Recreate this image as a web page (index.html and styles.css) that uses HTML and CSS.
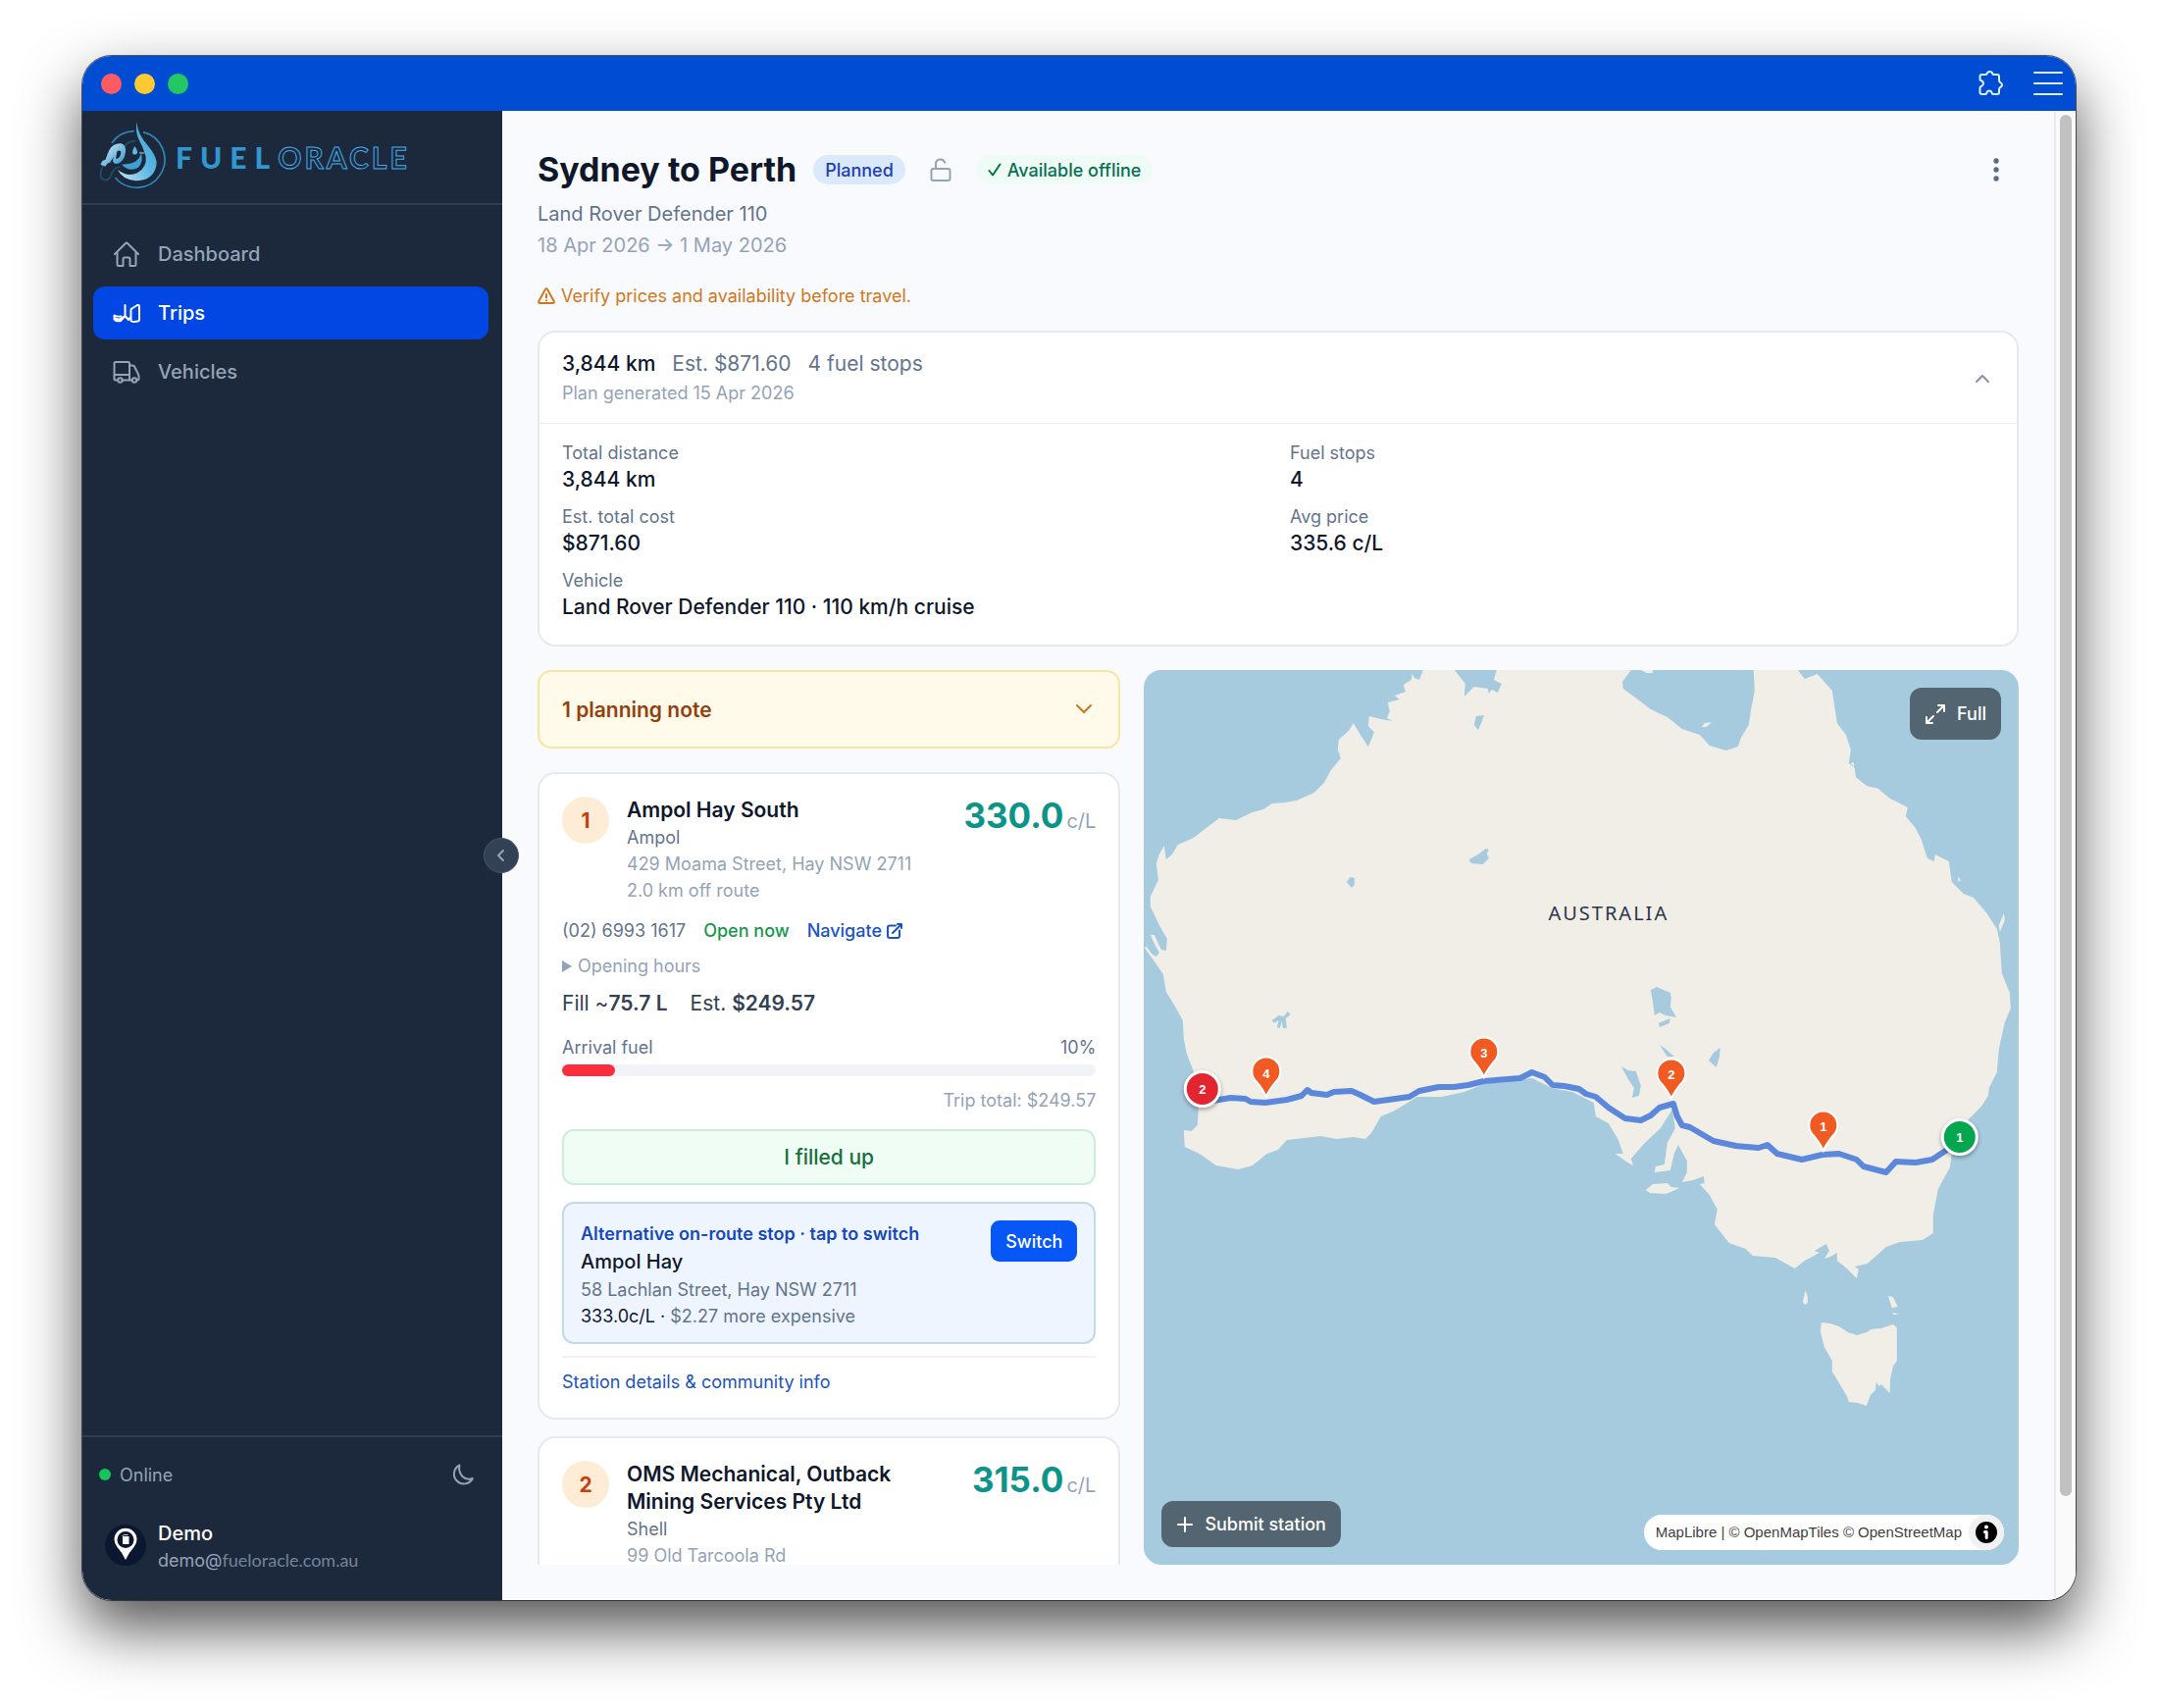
FILE: index.html
```html
<!DOCTYPE html>
<html lang="en">
<head>
<meta charset="utf-8">
<title>Fuel Oracle – Sydney to Perth</title>
<link rel="stylesheet" href="styles.css">
</head>
<body>
<div class="window">
  <div class="titlebar">
    <div class="lights"><i class="light red"></i><i class="light yellow"></i><i class="light green"></i></div>
    <div class="titlebar-actions">
      <button class="icon-btn" aria-label="Extensions">
        <svg width="28" height="28" viewBox="0 0 28 28" fill="none" stroke="currentColor" stroke-width="2" stroke-linejoin="round"><path d="M3.500 7Q3.500 5 5.500 5H9.500Q10.500 5 10.700 4Q11.300 2 13.500 2Q15.700 2 16.300 4Q16.500 5 17.500 5H21Q23 5 23 7V11Q23 12.300 24.300 13Q26 14 26 15.500Q26 17 24.300 18Q23 18.700 23 20V23Q23 25 21 25H17Q15.800 25 15.500 23.500Q15 21.500 13 21.500Q11 21.500 10.500 23.500Q10.200 25 9 25H5.500Q3.500 25 3.500 23V18.500Q3.500 17.500 4.800 17Q7 16 7 14Q7 12 4.800 11.300Q3.500 11 3.500 10Z"/></svg>
      </button>
      <button class="icon-btn" aria-label="Menu">
        <svg width="30" height="26" viewBox="0 0 30 26" stroke="currentColor" stroke-width="2" stroke-linecap="round"><path d="M1 2H29M1 13H29M1 24H29"/></svg>
      </button>
    </div>
  </div>

  <div class="body">
    <aside class="sidebar">
      <a class="brand" href="#" aria-label="Fuel Oracle">
        <svg class="brand-mark" viewBox="90 250 210 210" fill="none">
          <defs>
            <linearGradient id="drop" x1="0" y1="0" x2="1" y2="1"><stop offset="0" stop-color="#d5ecf8"/><stop offset="1" stop-color="#2f93cb"/></linearGradient>
            <linearGradient id="swoosh" x1="0" y1="1" x2="1" y2="0"><stop offset="0" stop-color="#c4e6f6"/><stop offset=".5" stop-color="#5cb6e2"/><stop offset="1" stop-color="#3a9ed6"/></linearGradient>
          </defs>
          <path d="M132 318A86 86 0 0 1 200 282M228 285A86 86 0 1 1 142 424" stroke="#2f86b8" stroke-width="5"/>
          <path d="M165 345Q172 312 205 312M105 388Q92 415 102 428Q122 440 132 412Q140 390 158 392" stroke="#1d4f66" stroke-width="5"/>
          <path d="M208 254Q211 292 242 326Q274 364 268 388Q258 434 205 434Q164 430 150 400Q180 424 210 410Q240 392 236 360Q228 330 214 306Q204 286 208 254Z" fill="url(#swoosh)"/>
          <path d="M162 384Q190 384 206 374Q218 364 222 350Q230 376 212 394Q184 408 162 384Z" fill="#3d9fd2"/>
          <path d="M202 328Q212 342 210 350Q202 358 195 350Q194 340 202 328Z" fill="#5fb8e2"/>
          <path d="M216 348L230 349" stroke="#7b8794" stroke-width="6"/>
          <path d="M97 384L104 372L112 370L124 340Q136 318 160 320Q176 324 174 346Q170 378 146 382Q130 380 138 360L126 378L120 380L112 390ZM148 344L144 366Q158 366 160 348Q160 338 148 344Z" fill="url(#drop)" fill-rule="evenodd"/>
        </svg>
        <span class="brand-name"><b>FUEL</b><span>ORACLE</span></span>
      </a>
      <nav class="nav">
        <a class="nav-item" href="#">
          <svg width="28" height="28" viewBox="0 0 28 28" fill="none" stroke="currentColor" stroke-width="2" stroke-linejoin="round" stroke-linecap="round"><path d="M2 14L12.800 3.200Q14 2 15.200 3.200L26 14M4.500 12V24.500Q4.500 26 6 26H10.500V19Q10.500 17.500 12 17.500H16Q17.500 17.500 17.500 19V26H22Q23.500 26 23.500 24.500V12"/></svg>
          Dashboard
        </a>
        <a class="nav-item active" href="#" aria-current="page">
          <svg width="28" height="28" viewBox="0 0 28 28" fill="none" stroke="currentColor" stroke-width="2" stroke-linejoin="round" stroke-linecap="round"><path d="M12.500 6V17L8 22Q3 23 1.500 20.500V16.500Q4 18 8.500 17.500M2 19.500Q7 21.500 9.500 19L12.500 17L16 21L18.500 17.500M18.500 19V11Q18.500 10 19.500 9.500L25 6Q27 5.500 27 7.500V21Q27 22 26 22.300Q21 24 18.500 22Z"/></svg>
          Trips
        </a>
        <a class="nav-item" href="#">
          <svg width="28" height="28" viewBox="0 0 28 28" fill="none" stroke="currentColor" stroke-width="2" stroke-linejoin="round" stroke-linecap="round"><path d="M5 22.500H3Q1.500 22.500 1.500 21V5.500Q1.500 4 3 4H15.500Q17 4 17 5.500V22.500H9.500M1.500 17H17M17 7.500H20Q21.500 7.500 22.300 9L26.200 17Q26.800 18.500 26.500 21Q26.500 22.500 25 22.500M17 22.500H19.500"/><circle cx="7.500" cy="22.500" r="2.200"/><circle cx="22" cy="22.500" r="2.200"/></svg>
          Vehicles
        </a>
      </nav>
      <div class="sidebar-foot">
        <div class="status">
          <span class="status-label"><i class="dot"></i>Online</span>
          <button class="icon-btn muted" aria-label="Dark mode">
            <svg width="24" height="24" viewBox="0 0 24 24" fill="none" stroke="currentColor" stroke-width="2" stroke-linejoin="round"><path d="M8.500 2.500A10 10 0 1 0 21.800 16Q15.500 18 11.500 14Q7 9 8.500 2.500Z"/></svg>
          </button>
        </div>
        <div class="user">
          <svg width="42" height="42" viewBox="0 0 42 42"><circle cx="21" cy="21" r="21" fill="#0b1730"/><path d="M21 36Q18 29 12.500 23A11.500 11.500 0 1 1 29.500 23Q24 29 21 36Z" fill="#fff"/><circle cx="21" cy="15.500" r="8.500" fill="#0b1730"/><path d="M18 12H24.500V20H18Z" fill="#fff"/><path d="M17.500 12L19 10.500H23.500" stroke="#cbd5e1" fill="none"/></svg>
          <div>
            <div class="user-name">Demo</div>
            <div class="user-mail">demo@<span>fueloracle.com.au</span></div>
          </div>
        </div>
      </div>
      <button class="collapse" aria-label="Collapse sidebar">
        <svg width="12" height="14" viewBox="0 0 12 14" fill="none" stroke="currentColor" stroke-width="2" stroke-linecap="round" stroke-linejoin="round"><path d="M8 2L3 7L8 12"/></svg>
      </button>
    </aside>

    <main class="main">
      <header>
        <div class="head-row">
          <h1>Sydney to Perth</h1>
          <span class="pill pill-blue">Planned</span>
          <button class="icon-btn lock" aria-label="Unlocked">
            <svg width="24" height="24" viewBox="0 0 24 24" fill="none" stroke="currentColor" stroke-width="2" stroke-linecap="round" stroke-linejoin="round"><rect x="2.500" y="11" width="19" height="12" rx="2"/><path d="M7 11V6A4.700 4.700 0 0 1 16.200 4.800"/></svg>
          </button>
          <span class="pill pill-green"><svg width="14" height="16" viewBox="0 0 14 16" fill="none" stroke="currentColor" stroke-width="2" stroke-linecap="round" stroke-linejoin="round"><path d="M1.500 9L5 13.500L12.500 2.500"/></svg>Available offline</span>
          <button class="icon-btn more" aria-label="More actions">
            <svg width="8" height="24" viewBox="0 0 8 24" fill="currentColor"><circle cx="4" cy="3" r="2.700"/><circle cx="4" cy="12" r="2.700"/><circle cx="4" cy="21" r="2.700"/></svg>
          </button>
        </div>
        <p class="vehicle">Land Rover Defender 110</p>
        <p class="dates">18 Apr 2026 → 1 May 2026</p>
        <p class="warning"><svg width="18" height="18" viewBox="0 0 18 18" fill="none" stroke="currentColor" stroke-width="2" stroke-linecap="round" stroke-linejoin="round"><path d="M7.900 2Q9 .5 10.100 2L16.700 14Q17.300 16 15.500 16H2.500Q.7 16 1.300 14ZM9 7V10.500M9 13.200V13.300"/></svg>Verify prices and availability before travel.</p>
      </header>

      <section class="card summary">
        <div class="summary-head">
          <div>
            <p class="summary-line"><strong>3,844 km</strong><span>Est. $871.60</span><span>4 fuel stops</span></p>
            <p class="generated">Plan generated 15 Apr 2026</p>
          </div>
          <button class="icon-btn fold" aria-label="Collapse summary"><svg width="16" height="10" viewBox="0 0 16 10" fill="none" stroke="currentColor" stroke-width="2" stroke-linecap="round" stroke-linejoin="round"><path d="M2 8L8 2L14 8"/></svg></button>
        </div>
        <dl class="facts">
          <div><dt>Total distance</dt><dd>3,844 km</dd></div>
          <div><dt>Fuel stops</dt><dd>4</dd></div>
          <div><dt>Est. total cost</dt><dd>$871.60</dd></div>
          <div><dt>Avg price</dt><dd>335.6 c/L</dd></div>
          <div><dt>Vehicle</dt><dd>Land Rover Defender 110 · 110 km/h cruise</dd></div>
        </dl>
      </section>

      <div class="columns">
        <div class="stops">
          <button class="note">1 planning note<svg width="18" height="12" viewBox="0 0 18 12" fill="none" stroke="currentColor" stroke-width="2" stroke-linecap="round" stroke-linejoin="round"><path d="M2 2L9 9L16 2"/></svg></button>

          <article class="card stop">
            <div class="stop-head">
              <span class="num">1</span>
              <div class="stop-id">
                <h2>Ampol Hay South</h2>
                <p class="brandname">Ampol</p>
                <p class="light-text">429 Moama Street, Hay NSW 2711</p>
                <p class="light-text">2.0 km off route</p>
              </div>
              <p class="price"><b>330.0</b><span>c/L</span></p>
            </div>
            <div class="contact">
              <span>(02) 6993 1617</span>
              <span class="open">Open now</span>
              <a href="#">Navigate<svg width="18" height="18" viewBox="0 0 18 18" fill="none" stroke="currentColor" stroke-width="2" stroke-linecap="round" stroke-linejoin="round"><path d="M10 3.500H4Q2 3.500 2 5.500V14Q2 16 4 16H12Q14 16 14 14V8.500M7 11L16 2M12 2H16V6"/></svg></a>
            </div>
            <details class="hours"><summary>Opening hours</summary></details>
            <p class="fill"><span>Fill ~<b>75.7 L</b></span><span>Est. <b>$249.57</b></span></p>
            <div class="arrival"><span>Arrival fuel</span><span>10%</span></div>
            <div class="bar"><div style="width:10%"></div></div>
            <p class="total">Trip total: $249.57</p>
            <button class="filled">I filled up</button>
            <div class="alt">
              <div>
                <p class="alt-title">Alternative on-route stop · tap to switch</p>
                <p class="alt-name">Ampol Hay</p>
                <p>58 Lachlan Street, Hay NSW 2711</p>
                <p><span class="ink">333.0c/L ·</span> $2.27 more expensive</p>
              </div>
              <button class="switch">Switch</button>
            </div>
            <div class="stop-foot"><a href="#">Station details &amp; community info</a></div>
          </article>

          <article class="card stop">
            <div class="stop-head">
              <span class="num">2</span>
              <div class="stop-id">
                <h2>OMS Mechanical, Outback Mining Services Pty Ltd</h2>
                <p class="brandname">Shell</p>
                <p class="light-text">99 Old Tarcoola Rd</p>
              </div>
              <p class="price"><b>315.0</b><span>c/L</span></p>
            </div>
          </article>
        </div>

        <div class="map">
          <svg class="map-canvas" viewBox="1166 683 892 912" preserveAspectRatio="xMidYMid slice" role="img" aria-label="Route map of Australia">
            <g fill="#f1eee8">
              <path d="M1451 683L1447 693L1442 691L1440 687L1439 693L1431 698L1433 705L1422 709L1427 713L1415 716L1417 725L1414 732L1420 735L1408 733L1396 730L1395 740L1401 746L1399 752L1395 761L1387 749L1380 737L1375 745L1365 754L1364 764L1367 773L1357 785L1350 798L1340 808L1322 816L1310 818L1297 819L1288 825L1277 828L1260 836L1243 834L1230 844L1217 854L1201 861L1195 871L1189 876L1187 862L1182 871L1179 880L1181 897L1173 914L1173 924L1182 943L1190 957L1189 969L1184 968L1177 953L1173 953L1177 962L1182 971L1179 975L1175 973L1169 965L1167 966L1177 980L1186 993L1189 1011L1197 1024L1206 1040L1207 1059L1210 1074L1217 1092L1222 1131L1221 1147L1215 1153L1207 1152L1208 1169L1223 1176L1240 1188L1263 1192L1277 1188L1292 1176L1303 1172L1312 1162L1347 1158L1363 1161L1380 1159L1392 1161L1398 1155L1408 1138L1422 1132L1445 1118L1470 1118L1493 1113L1513 1105L1533 1102L1562 1099L1582 1109L1603 1113L1625 1124L1627 1138L1640 1145L1650 1162L1655 1176L1647 1176L1658 1184L1665 1188L1663 1181L1677 1165L1693 1150L1705 1131L1708 1150L1700 1165L1697 1187L1688 1189L1687 1195L1703 1193L1707 1176L1711 1167L1720 1183L1720 1195L1715 1205L1726 1203L1737 1199L1738 1206L1733 1207L1743 1218L1751 1233L1748 1248L1763 1267L1780 1273L1787 1280L1810 1282L1830 1293L1840 1285L1855 1277L1850 1275L1862 1268L1865 1275L1860 1283L1866 1281L1873 1277L1873 1285L1883 1293L1893 1303L1895 1294L1891 1291L1904 1288L1923 1271L1937 1266L1960 1264L1971 1257L1971 1238L1976 1212L1988 1190L1990 1176L2007 1141L2020 1128L2027 1117L2028 1109L2036 1093L2038 1069L2044 1042L2050 1028L2049 1012L2041 992L2039 961L2036 947L2025 930L2012 915L2002 911L1990 899L1987 878L1973 871L1972 878L1965 875L1959 856L1953 844L1943 832L1945 823L1927 814L1915 804L1903 801L1892 792L1891 783L1885 778L1887 764L1882 749L1873 737L1868 704L1853 687L1840 692L1833 683H1788L1789 704L1785 725L1783 739L1775 752L1772 761L1760 765L1743 760L1733 749L1715 743L1700 731L1683 723L1670 713L1655 702L1654 695L1663 683H1526L1523 693L1531 697L1527 706L1521 703L1518 707L1517 702L1503 700L1493 710L1494 697L1483 683Z"/>
              <path d="M1678 1213L1685 1207L1700 1206L1704 1210L1712 1211L1706 1214L1698 1217L1682 1216Z"/>
              <path d="M1841 1315L1843 1322L1843 1328L1840 1330L1838 1327Z"/>
              <path d="M1925 1321L1930 1322L1935 1332L1929 1333Z"/>
              <path d="M1930 1338L1937 1340L1930 1340Z"/>
              <path d="M1857 1348L1866 1349L1875 1352L1884 1358L1893 1361L1903 1358L1908 1355L1918 1354L1930 1350L1934 1353L1934 1387L1930 1393L1927 1407L1927 1420L1922 1415L1918 1411L1916 1413L1913 1409L1912 1417L1907 1422L1903 1433L1894 1430L1885 1429L1883 1423L1877 1413L1868 1398L1868 1387L1860 1373L1856 1357Z"/>
              <path d="M2043 931L2044 938L2039 950L2038 943Z"/>
              <path d="M1735 741L1738 737L1745 736L1740 741Z"/>
              <path d="M1673 683H1685V686H1679Z"/>
              <path d="M1887 778L1890 777L1890 782ZM1996 893L1999 897L1997 899Z"/>
            </g>
            <g fill="#a6cbdf">
              <path d="M1503 739L1505 730L1513 729L1510 738L1507 744Z"/>
              <path d="M1498 876L1507 871L1515 865L1518 866L1516 870L1518 875L1512 881L1500 880Z"/>
              <path d="M1373 899L1377 894L1381 895L1381 902L1378 905Z"/>
              <path d="M1683 1009L1689 1006L1703 1012L1704 1017L1703 1026L1709 1037L1698 1035L1692 1032L1687 1035L1685 1020Z"/>
              <path d="M1691 1043L1703 1038L1702 1043L1692 1047Z"/>
              <path d="M1692 1065L1698 1069L1707 1077L1700 1077Z"/>
              <path d="M1742 1081L1747 1073L1754 1068L1753 1078L1750 1088Z"/>
              <path d="M1653 1087L1660 1091L1668 1092L1670 1098L1673 1107L1671 1117L1664 1119L1666 1109L1660 1100Z"/>
              <path d="M1297 1040L1304 1035L1309 1036L1313 1031L1316 1034L1311 1038L1312 1048L1308 1048L1307 1041L1305 1048L1302 1047L1304 1040L1299 1043Z"/>
            </g>
            <path fill="none" stroke="#5c88dc" stroke-width="6" stroke-linejoin="round" d="M1235 1122L1243 1121L1255 1119L1270 1120L1275 1123L1290 1124L1312 1121L1327 1117L1333 1111L1337 1114L1353 1116L1360 1113L1378 1112L1387 1116L1401 1123L1437 1118L1447 1112L1467 1108L1482 1108L1497 1106L1513 1102L1550 1099L1562 1093L1575 1098L1583 1106L1595 1107L1610 1110L1617 1115L1627 1118L1640 1129L1657 1140L1673 1142L1683 1137L1692 1129L1706 1125L1710 1138L1715 1147L1723 1149L1747 1163L1770 1168L1793 1170L1802 1167L1812 1176L1837 1182L1858 1177L1875 1176L1893 1182L1900 1189L1923 1195L1933 1184L1953 1185L1970 1182L1985 1172"/>
            <text class="country" x="1640" y="938" text-anchor="middle">AUSTRALIA</text>
            <defs><path id="pin" d="M0 25Q-3 18 -10 9.500A14.500 14.500 0 1 1 10 9.500Q3 18 0 25Z" fill="#f15a22" stroke="#fff" stroke-width="2"/></defs>
            <g class="marks" text-anchor="middle">
              <use href="#pin" x="1291" y="1093"/><text x="1291" y="1099">4</text>
              <use href="#pin" x="1513" y="1073"/><text x="1513" y="1078">3</text>
              <use href="#pin" x="1704" y="1095"/><text x="1704" y="1100">2</text>
              <use href="#pin" x="1859" y="1148"/><text x="1859" y="1153">1</text>
              <g class="ends"><circle cx="1226" cy="1110" r="17.500" fill="#e32431"/><circle cx="1998" cy="1159" r="17.500" fill="#06a650"/></g>
              <text x="1226" y="1115">2</text><text x="1998" y="1164">1</text>
            </g>
          </svg>
          <button class="map-btn full"><svg width="22" height="22" viewBox="0 0 22 22" fill="none" stroke="currentColor" stroke-width="2" stroke-linecap="round" stroke-linejoin="round"><path d="M13 9L20 2M14 2H20V8M9 13L2 20M2 14V20H8"/></svg>Full</button>
          <button class="map-btn submit"><svg width="18" height="18" viewBox="0 0 18 18" stroke="currentColor" stroke-width="2" stroke-linecap="round"><path d="M9 2V16M2 9H16"/></svg>Submit station</button>
          <div class="credits"><span><a href="#">MapLibre</a> | <a href="#">© OpenMapTiles</a> <a href="#">© OpenStreetMap</a></span><button aria-label="Toggle attribution"><svg width="22" height="22" viewBox="0 0 22 22"><circle cx="11" cy="11" r="11"/><circle cx="11" cy="5.500" r="2" fill="#fff"/><path d="M9.500 10.500H11.200V16.500" fill="none" stroke="#fff" stroke-width="3" stroke-linecap="round" stroke-linejoin="round"/></svg></button></div>
        </div>
      </div>
    </main>
    <div class="scrollbar"><div class="thumb"></div></div>
  </div>
</div>
</body>
</html>
```
FILE: styles.css
```css
* { box-sizing: border-box; }
body, h1, h2, p, dl, dd { margin: 0; }
body {
  height: 100vh;
  display: flex;
  padding: 57px 84px 110px;
  background: #fff;
  color: #0f172a;
  font: 400 18px/27px Inter, "Liberation Sans", sans-serif;
}
button { font: inherit; color: inherit; border: 0; background: none; padding: 0; }
a { color: inherit; text-decoration: none; }
svg { display: block; flex: none; }

.window {
  flex: 1;
  min-width: 0;
  display: flex;
  flex-direction: column;
  border-radius: 30px;
  overflow: hidden;
  box-shadow: 0 0 0 1px rgba(20, 25, 35, .7), 0 29px 62px rgba(0, 0, 0, .68);
}
.titlebar {
  flex: none;
  height: 56px;
  padding: 0 13px 0 19px;
  display: flex;
  align-items: center;
  justify-content: space-between;
  background: #004dd4;
  color: #dff1ff;
}
.lights { display: flex; gap: 13px; }
.light { width: 21px; height: 21px; border-radius: 50%; }
.red { background: #ff5b62; }
.yellow { background: #ffc933; }
.green { background: #24c862; }
.titlebar-actions { display: flex; align-items: center; gap: 30px; }

.body { flex: 1; min-height: 0; display: flex; background: #f9fafd; }

.sidebar {
  position: relative;
  flex: none;
  width: 428px;
  display: flex;
  flex-direction: column;
  background: #1c293c;
  color: #94a3b8;
}
.brand {
  display: flex;
  align-items: center;
  gap: 9px;
  height: 96px;
  padding: 0 16px;
  border-bottom: 2px solid #2f3e52;
}
.brand-mark { width: 70px; height: 70px; margin-bottom: 4px; }
.brand-name {
  display: flex;
  font: 900 30px/36px Lato, sans-serif;
  letter-spacing: 8px;
  color: #3296cf;
}
.brand-name span { font-weight: 700; color: transparent; -webkit-text-stroke: 1px #45aae6; letter-spacing: 3px; }

.nav { flex: 1; display: flex; flex-direction: column; gap: 6px; padding: 23px 14px 24px 11px; }
.nav-item {
  display: flex;
  align-items: center;
  gap: 18px;
  height: 54px;
  padding: 0 20px;
  border-radius: 12px;
  font-size: 20px;
  font-weight: 500;
}
.nav-item.active { background: #0246e4; color: #fff; }

.sidebar-foot { border-top: 2px solid #2f3e52; padding: 23px 24px 24px 17px; }
.status { display: flex; align-items: center; justify-content: space-between; height: 30px; padding-right: 4px; }
.status-label { display: flex; align-items: center; gap: 9px; }
.dot { width: 12px; height: 12px; border-radius: 50%; background: #16c45c; }
.user { display: flex; align-items: center; gap: 12px; margin-top: 32px; padding: 0 6px 3px; }
.user svg { margin-bottom: 4px; }
.user-name { font-size: 20px; font-weight: 500; color: #fff; }
.user-mail span { font-family: Lato, sans-serif; color: #74849b; }
.collapse {
  position: absolute;
  right: -17px;
  top: 50%;
  width: 36px;
  height: 36px;
  margin-top: -18px;
  display: grid;
  place-items: center;
  border: 1px solid #47566b;
  border-radius: 50%;
  background: #334155;
}

.main { flex: 1; min-width: 0; display: flex; flex-direction: column; padding: 36px; }
.head-row { display: flex; align-items: center; height: 48px; }
h1 { font-size: 34px; line-height: 48px; font-weight: 700; }
.pill { display: flex; align-items: center; gap: 6px; height: 30px; border-radius: 15px; padding: 0 12px; font-weight: 500; }
.pill-blue { margin-left: 17px; background: #dbe9fd; color: #1e40af; }
.pill-green { margin-left: 24px; background: #effcf5; color: #077053; }
.lock { margin-left: 24px; color: #94a3b8; }
.more { margin-left: auto; margin-right: 19px; color: #5b6b80; }
.vehicle, .dates { font-size: 20px; line-height: 32px; color: #64748b; }
.vehicle { margin-top: 5px; }
.dates { color: #94a3b8; }
.warning { display: flex; align-items: center; gap: 6px; margin: 22px 0; color: #cf781c; }

.card { background: #fff; border: 2px solid #e5e9f0; border-radius: 18px; }
.summary { margin-bottom: 24px; flex: none; }
.summary-head {
  display: flex;
  align-items: center;
  justify-content: space-between;
  padding: 17px 27px 15px 23px;
  border-bottom: 1px solid #e8ebf1;
}
.summary-line { display: flex; gap: 17px; font-size: 21px; line-height: 30px; color: #64748b; }
.summary-line strong { font-weight: 500; color: #0f172a; }
.generated { line-height: 30px; color: #94a3b8; }
.fold { color: #8492a8; }
.facts { display: grid; grid-template-columns: 1fr 1fr; gap: 11px 24px; padding: 17px 23px 24px; }
dt { line-height: 26px; color: #64748b; }
dd { font-size: 21px; line-height: 28px; font-weight: 500; }
.facts > div { height: 54px; }

.columns { flex: 1; min-height: 0; display: grid; grid-template: minmax(0, 1fr) / 2fr 3fr; gap: 24px; }
.stops { overflow-y: auto; scrollbar-width: none; }
.note {
  width: 100%;
  height: 80px;
  margin-bottom: 24px;
  padding: 0 26px 0 23px;
  display: flex;
  align-items: center;
  justify-content: space-between;
  border: 2px solid #f6e6a0;
  border-radius: 14px;
  background: #fffaea;
  color: #93400f;
  font-size: 21px;
  font-weight: 600;
}
.note svg { color: #c8781a; }
.stop { padding: 23px; margin-bottom: 17px; }
.stop-head { display: flex; align-items: flex-start; }
.num {
  flex: none;
  width: 48px;
  height: 48px;
  margin-right: 18px;
  display: grid;
  place-items: center;
  border-radius: 50%;
  background: #feecd6;
  color: #c2410c;
  font-size: 21px;
  font-weight: 700;
}
.stop-id { flex: 1; }
h2 { font-size: 21px; line-height: 28px; font-weight: 600; }
.brandname { color: #64748b; }
.light-text { color: #94a3b8; }
.price { display: flex; align-items: baseline; gap: 3px; margin-left: 24px; color: #94a3b8; font-size: 20px; line-height: 38px; }
.price b { font-size: 35px; font-weight: 700; color: #0d9488; }
.contact { display: flex; gap: 18px; margin-top: 14px; color: #64748b; }
.contact .open { color: #16994a; font-weight: 500; }
.contact a { display: flex; align-items: center; gap: 4px; color: #1a54c8; font-weight: 500; }
.hours { margin-top: 9px; color: #94a3b8; }
.hours summary { display: flex; align-items: center; gap: 6px; }
.hours summary::before { content: ""; border: solid transparent; border-width: 6px 0 6px 10px; border-left-color: #94a3b8; }
.fill { display: flex; gap: 23px; margin-top: 10px; font-size: 21px; line-height: 30px; color: #334155; }
.fill b { font-weight: 600; }
.arrival { display: flex; justify-content: space-between; margin-top: 16px; color: #64748b; }
.bar { height: 12px; margin-top: 4px; border-radius: 6px; background: #f1f3f9; }
.bar div { height: 100%; border-radius: 6px; background: #fb2c3c; }
.total { margin-top: 11px; text-align: right; color: #94a3b8; }
.filled {
  width: 100%;
  height: 57px;
  margin: 16px 0 17px;
  border: 2px solid #cbeedb;
  border-radius: 12px;
  background: #f0fdf5;
  color: #15703c;
  font-size: 21px;
  font-weight: 500;
}
.alt {
  display: flex;
  justify-content: space-between;
  align-items: flex-start;
  padding: 17px 17px 13px;
  border: 2px solid #c3d9ee;
  border-radius: 12px;
  background: #eef5fe;
  color: #64748b;
}
.alt-title { font-weight: 600; color: #1648b8; }
.alt-name { font-size: 20px; line-height: 30px; font-weight: 500; color: #0f172a; }
.ink { color: #0f172a; }
.switch { height: 42px; padding: 0 15px; border-radius: 9px; background: #0657f5; color: #fff; font-weight: 500; }
.stop-foot { margin-top: 12px; padding-top: 11px; border-top: 2px solid #f0f2f6; color: #1a54c0; }

.map { position: relative; overflow: hidden; border-radius: 18px; background: #a6cbdf; }
.map-canvas { position: absolute; inset: 0; width: 100%; height: 100%; }
.country { font: 400 20px "Noto Sans", sans-serif; letter-spacing: 2px; fill: #2c3646; }
.marks text { font: 700 13px "Liberation Sans", sans-serif; fill: #fff; }
.ends circle { stroke: #fff; stroke-width: 3px; }
.ends { filter: drop-shadow(0 2px 2px rgba(0, 0, 0, .35)); }
.map-btn {
  position: absolute;
  display: flex;
  align-items: center;
  gap: 11px;
  padding: 0 15px;
  border-radius: 12px;
  background: #536570;
  color: #fff;
  font-weight: 500;
}
.full { top: 18px; right: 18px; height: 53px; }
.submit { left: 18px; bottom: 18px; height: 47px; }
.credits {
  position: absolute;
  right: 15px;
  bottom: 15px;
  display: flex;
  align-items: center;
  gap: 7px;
  padding-left: 12px;
  border-radius: 18px;
  background: #fff;
  color: #404040;
  font: 400 15px/36px "Liberation Sans", sans-serif;
}
.credits button { width: 36px; height: 36px; display: grid; place-items: center; border-radius: 50%; background: #f1f1f3; }

.scrollbar { flex: none; width: 22px; padding: 4px 4px 106px; border-left: 2px solid #e9ebf0; background: #fafafa; }
.thumb { height: 100%; border-radius: 6px; background: #c1c1c1; }
```
